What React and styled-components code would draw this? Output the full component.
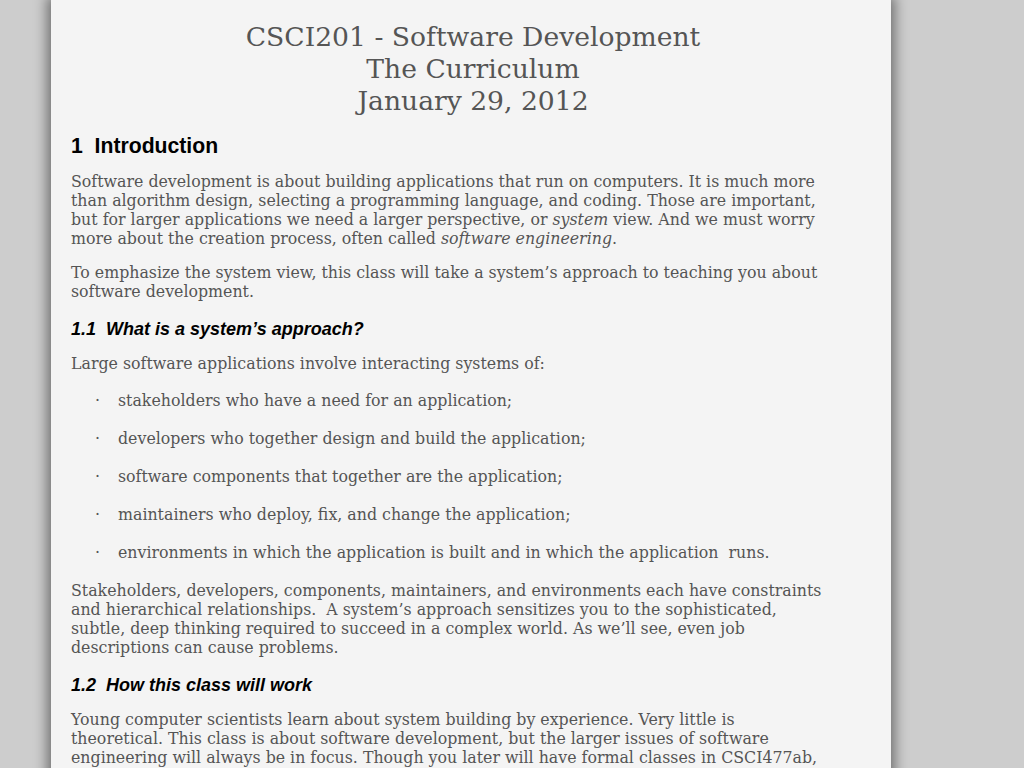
import React from "react";
import styled, { createGlobalStyle } from "styled-components";

const Global = createGlobalStyle`
  html, body { margin: 0; background: #cdcdcd; overflow: hidden; }
`;
const Page = styled.div`
  width: 840px; margin-left: 51px; background: #f4f4f4; min-height: 768px;
  box-shadow: 0 0 12px 4px rgba(0,0,0,0.45);
  padding: 21px 66px 0 20px; box-sizing: border-box;
  font-family: "DejaVu Serif", serif; color: #555; font-size: 15.8px; line-height: 19px;
`;
const Title = styled.div`
  text-align: center; font-size: 26.6px; line-height: 32px; color: #555; padding-left: 50px;
`;
const H1 = styled.h1`
  font-family: "Liberation Sans", Arial, sans-serif; font-size: 21.2px; color: #000;
  margin: 17px 0 14px; font-weight: bold; line-height: 24px;
`;
const H2 = styled.h2`
  font-family: "Liberation Sans", Arial, sans-serif; font-size: 18px; font-style: italic;
  color: #000; margin: 17px 0 14px; font-weight: bold; line-height: 22px;
`;
const P = styled.p` margin: 0 0 15px; `;
const List = styled.ul` list-style: none; padding: 0 0 0 24px; margin: 0 0 16px; `;
const Item = styled.li`
  display: flex; margin-bottom: 19px;
  &::before { content: "·"; width: 23px; }
`;

export default function App() {
  return (
    <>
      <Global />
      <Page>
        <Title>CSCI201 - Software Development<br />The Curriculum<br />January 29, 2012</Title>
        <H1>1&nbsp; Introduction</H1>
        <P>Software development is about building applications that run on computers. It is much more than algorithm design, selecting a programming language, and coding. Those are important, but for larger applications we need a larger perspective, or <i>system</i> view. And we must worry more about the creation process, often called <i>software engineering</i>.</P>
        <P>To emphasize the system view, this class will take a system’s approach to teaching you about software development.</P>
        <H2>1.1&nbsp; What is a system’s approach?</H2>
        <P style={{marginBottom: 18}}>Large software applications involve interacting systems of:</P>
        <List>
          <Item>stakeholders who have a need for an application;</Item>
          <Item>developers who together design and build the application;</Item>
          <Item>software components that together are the application;</Item>
          <Item>maintainers who deploy, fix, and change the application;</Item>
          <Item>environments in which the application is built and in which the application&nbsp; runs.</Item>
        </List>
        <P>Stakeholders, developers, components, maintainers, and environments each have constraints and hierarchical relationships.&nbsp; A system’s approach sensitizes you to the sophisticated, subtle, deep thinking required to succeed in a complex world. As we’ll see, even job descriptions can cause problems.</P>
        <H2>1.2&nbsp; How this class will work</H2>
        <P>Young computer scientists learn about system building by experience. Very little is theoretical. This class is about software development, but the larger issues of software engineering will always be in focus. Though you later will have formal classes in CSCI477ab, software engineering is something you should learn now.</P>
      </Page>
    </>
  );
}
